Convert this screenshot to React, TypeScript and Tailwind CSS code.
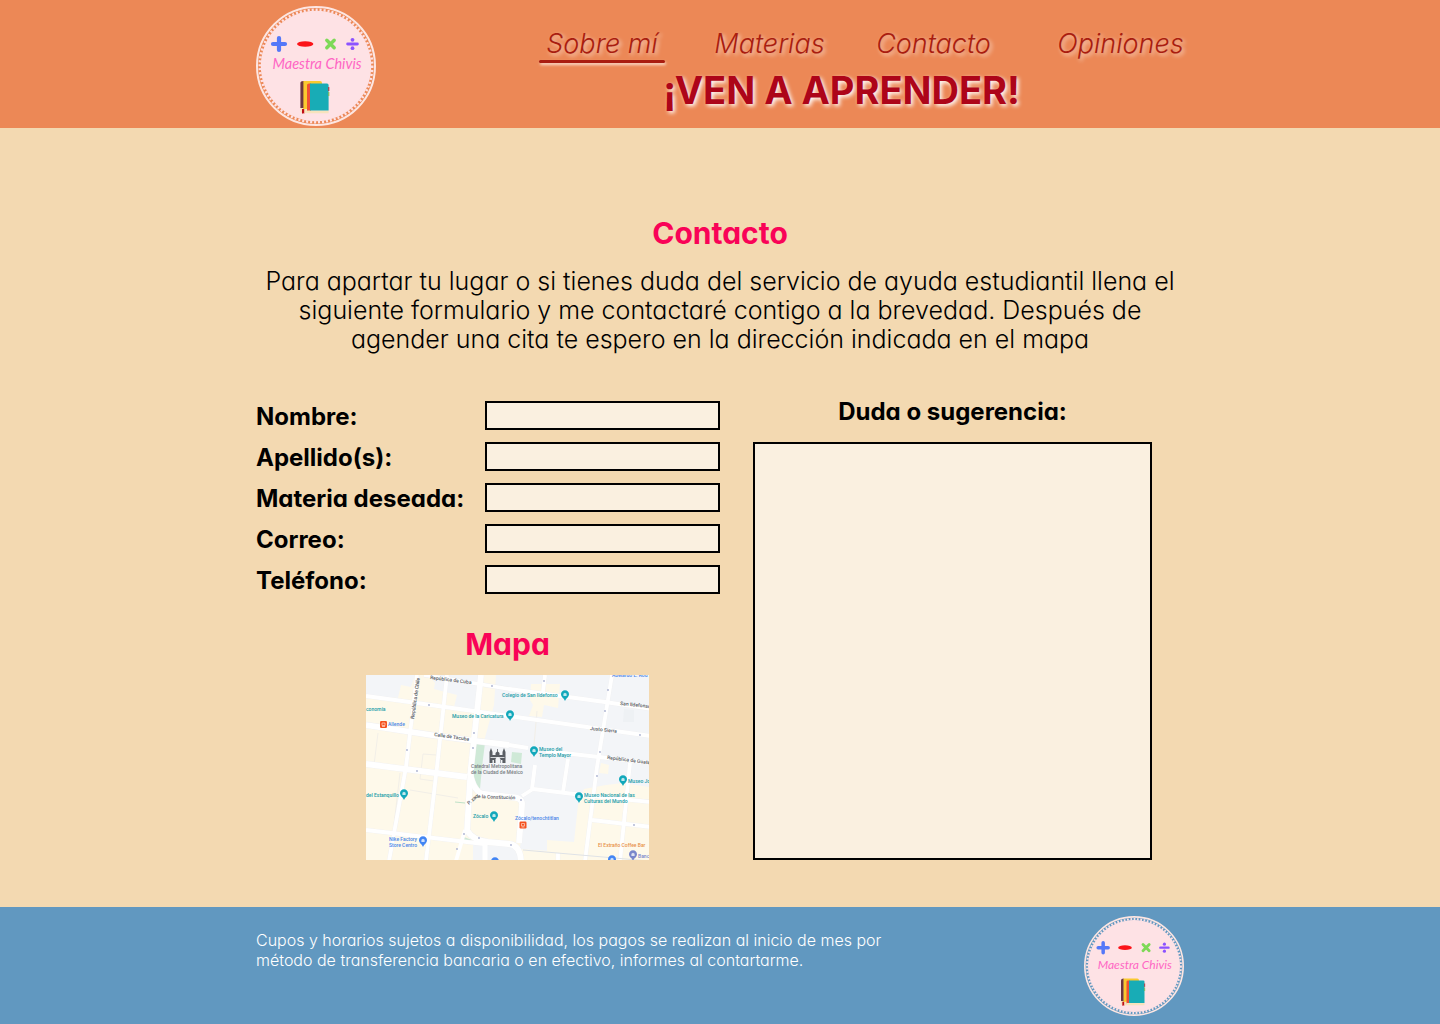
type LogoProps = { className: string };

function Logo({ className }: LogoProps) {
  return (
    <svg viewBox="0 0 120 120" className={className} role="img" aria-label="Maestra Chivis">
      <circle cx="60" cy="60" r="59" fill="none" stroke="#fde6e2" strokeWidth="2" />
      <circle cx="60" cy="60" r="55.2" fill="#fee2e5" />
      <circle cx="60" cy="60" r="56.2" fill="none" stroke="#fee2e5" strokeWidth="2.6" strokeDasharray="2.1 1.9" />
      <path d="M23 32v12M17 38h12" stroke="#5478f8" strokeWidth="4.2" strokeLinecap="round" />
      <ellipse cx="49.2" cy="38" rx="8.2" ry="2.8" fill="#fb1419" />
      <path d="M70.8 34.2l7.4 7.6M78.2 34.2l-7.4 7.6" stroke="#7ed957" strokeWidth="3.4" strokeLinecap="round" />
      <path d="M91.6 38h9.8" stroke="#8c52ff" strokeWidth="2.8" strokeLinecap="round" />
      <circle cx="96.5" cy="33.8" r="1.9" fill="#8c52ff" />
      <circle cx="96.5" cy="42.2" r="1.9" fill="#8c52ff" />
      <text x="61" y="63" textAnchor="middle" fontSize="14.5" fontStyle="italic" fill="#ff66c4" className="font-['Lato',sans-serif]">
        Maestra Chivis
      </text>
      <path d="M44.400 101h8v6h-6q-2 0-2-2z" fill="#f7e3bd" />
      <path d="M47 75h17q2 0 2 2v26H47z" fill="#fac92f" />
      <path d="M44.400 77q0-2 3-2v27h-3z" fill="#6c3640" />
      <path d="M46 103h2.200v5l-1.100-1-1.100 1z" fill="#c00d17" />
      <path d="M51 79q0-1.500 2-1.500h2V105h-4z" fill="#ef5035" />
      <path d="M51 104.500h21.600v2.700H53q-2 0-2-2.700z" fill="#f7e3bd" />
      <path d="M54 77.500h17q1.600 0 1.600 1.500v25.500H54z" fill="#18acb6" />
      <path d="M72.800 81v4" stroke="#b3212d" strokeWidth="1" />
      <path d="M72.800 86v4" stroke="#77b944" strokeWidth="1" />
    </svg>
  );
}

const minorRoads = [
  "M58 0L143 14L239 27L285 34",
  "M0 21L65 30L143 41L285 61",
  "M51 0L40 92L23 186",
  "M81 0L71 92L60 186",
  "M0 155L118 169",
  "M179 0L177 17",
  "M156 121L167 114L216 120L285 127",
  "M226 145L285 152",
  "M246 0L231 92L219 186",
  "M264 88L254 186",
  "M202 84L197 117",
  "M169 90L166 114",
  "M192 178V186",
  "M143 70L162 73",
  "M180 76L285 88",
];

const majorRoads = [
  "M0 50L65 60L110 66L143 70",
  "M0 89L101 102",
  "M115 0L105 92L104 106L101 157",
  "M104 98Q108 118 118 119L143 122Q157 122 156 130L153 168",
  "M101 155Q106 165 122 167L143 169Q154 170 155 186",
];

type Pin = { x: number; y: number; color: string };

const pins: Pin[] = [
  { x: 199, y: 20, color: "#12a8bb" },
  { x: 144, y: 40, color: "#12a8bb" },
  { x: 168, y: 76, color: "#12a8bb" },
  { x: 38, y: 119, color: "#12a8bb" },
  { x: 128, y: 141, color: "#12a8bb" },
  { x: 257, y: 105, color: "#12a8bb" },
  { x: 213, y: 122, color: "#12a8bb" },
  { x: 57, y: 166, color: "#4285f4" },
  { x: 267, y: 180, color: "#7986cb" },
  { x: 246, y: 185, color: "#4285f4" },
  { x: 129, y: 187, color: "#4285f4" },
];

type Label = { x: number; y: number; text: string; color: string; angle?: number };

const teal = "#179ca8";
const blue = "#4a86e8";
const gray = "#55595e";
const orange = "#e8914a";

const mapLabels: Label[] = [
  { x: 64, y: 4, text: "República de Cuba", color: gray, angle: 7 },
  { x: 48, y: 44, text: "República de Chile", color: gray, angle: -82 },
  { x: 0, y: 36, text: "conomía", color: teal },
  { x: 22, y: 51, text: "Allende", color: blue },
  { x: 68, y: 61, text: "Calle de Tacuba", color: gray, angle: 8 },
  { x: 86, y: 43, text: "Museo de la Caricatura", color: teal },
  { x: 136, y: 22, text: "Colegio de San Ildefonso", color: teal },
  { x: 246, y: 2, text: "Abelardo L. Rod", color: blue },
  { x: 254, y: 30, text: "San Ildefonso", color: gray, angle: 6 },
  { x: 224, y: 55, text: "Justo Sierra", color: gray, angle: 6 },
  { x: 173, y: 76, text: "Museo del", color: teal },
  { x: 173, y: 82, text: "Templo Mayor", color: teal },
  { x: 241, y: 84, text: "República de Guatem", color: gray, angle: 7 },
  { x: 105, y: 93, text: "Catedral Metropolitana", color: "#777c82" },
  { x: 105, y: 99, text: "de la Ciudad de México", color: "#777c82" },
  { x: 0, y: 122, text: "del Estanquillo", color: teal },
  { x: 109, y: 123, text: "de la Constitución", color: gray, angle: 2 },
  { x: 103, y: 130, text: "P. za", color: gray, angle: -42 },
  { x: 107, y: 143, text: "Zócalo", color: teal },
  { x: 149, y: 145, text: "Zócalo/tenochtitlan", color: blue },
  { x: 23, y: 166, text: "Nike Factory", color: blue },
  { x: 23, y: 172, text: "Store Centro", color: blue },
  { x: 262, y: 108, text: "Museo Jo", color: teal },
  { x: 218, y: 122, text: "Museo Nacional de las", color: teal },
  { x: 218, y: 128, text: "Culturas del Mundo", color: teal },
  { x: 232, y: 172, text: "El Extraño Coffee Bar", color: orange },
  { x: 272, y: 183, text: "Banc", color: "#7986cb" },
];

function StreetMap() {
  return (
    <svg
      viewBox="0 0 283 185"
      className="block w-full"
      role="img"
      aria-label="Mapa del centro de la Ciudad de México"
    >
      <rect width="283" height="185" fill="#fef9ea" />
      <path d="M0 0H49L45 12L35 10L32 23L0 20zM63 0H114L110 36L88 32L91 20L68 14L69 8z" fill="#f3f5f8" />
      <path
        d="M130 0H283V112L257 108L240 110L218 114L212 130L208 167L181 165V176L154 174L157 125L113 118L118 66L128 30z"
        fill="#f3f5f8"
      />
      <path d="M165 9H194L192 33L178 30L176 42L163 41L167 30L164 25z" fill="#fef9ea" />
      <path d="M235 88L243 90L242 99L233 98z" fill="#fef9ea" />
      <path d="M120 170L152 172V185H107V160z" fill="#f3f5f8" />
      <path d="M258 34L268 35V47H257z" fill="#eef1f4" />
      <path d="M110 67L119 68L116 92L114 114L105 102z" fill="#cfe9d7" />
      <path d="M146 77L156 78L155 89L145 87zM98 162L106 165L98 166z" fill="#cfe9d7" />
      <path d="M89 127L99 128" stroke="#bfe2c8" strokeWidth="1" />
      <g fill="none" stroke="#f2efe8" strokeWidth="1">
        <path d="M12 58L8 90M54 104L57 79L70 80M54 104L68 106M44 115L92 123M171 36L168 70M34 98L28 150" />
      </g>
      <g fill="none" stroke="#f0f0f1" strokeLinejoin="round">
        {minorRoads.map((d) => (
          <path key={d} d={d} strokeWidth="4.400" />
        ))}
        {majorRoads.map((d) => (
          <path key={d} d={d} strokeWidth="6.400" />
        ))}
      </g>
      <g fill="none" stroke="#ffffff" strokeLinejoin="round">
        {minorRoads.map((d) => (
          <path key={d} d={d} strokeWidth="3.800" />
        ))}
        {majorRoads.map((d) => (
          <path key={d} d={d} strokeWidth="5.800" />
        ))}
        <path d="M99 155L90 186" strokeWidth="3.800" />
        <path d="M119 168V186" strokeWidth="5" />
      </g>
      <path d="M157 175L283 186" stroke="#dfe2e6" strokeWidth="1" />
      <g fill="#a9b0cf">
        <circle cx="63" cy="30" r="0.900" />
        <circle cx="126" cy="11" r="0.900" />
        <circle cx="41" cy="75" r="0.900" />
        <circle cx="108" cy="58" r="0.900" />
        <circle cx="107" cy="73" r="0.900" />
        <circle cx="51" cy="96" r="0.900" />
        <circle cx="98" cy="159" r="0.900" />
        <circle cx="113" cy="163" r="0.900" />
        <circle cx="91" cy="174" r="0.900" />
        <circle cx="145" cy="170" r="0.900" />
        <circle cx="178" cy="6" r="0.900" />
        <circle cx="242" cy="15" r="0.900" />
        <circle cx="239" cy="36" r="0.900" />
        <circle cx="234" cy="77" r="0.900" />
        <circle cx="274" cy="60" r="0.900" />
        <circle cx="231" cy="101" r="0.900" />
        <circle cx="268" cy="150" r="0.900" />
        <circle cx="155" cy="125" r="0.900" />
      </g>
      <g fill="#5a5e64">
        <path d="M123.500 88V77l1.500-4 1.500 4v3h3v-2q2-3 4 0v2h3v-3l1.500-4 1.500 4v11h-5v-4q-3-4-5 0v4z" />
        <path d="M124.500 82h14v0.800h-14z" fill="#f3f5f8" />
        <path d="M126.500 85h1.400v3h-1.400zM135 85h1.400v3H135z" fill="#f3f5f8" />
        <path d="M131.200 74h.8v3h-.8z" />
      </g>
      {pins.map((pin) => (
        <g key={`${pin.x}-${pin.y}`}>
          <path
            d={`M${pin.x} ${pin.y + 6}q-.8-2.400-2.600-3.600a4 4 0 1 1 5.200 0q-1.800 1.200-2.600 3.600z`}
            fill={pin.color}
          />
          <path
            d={`M${pin.x - 1.600} ${pin.y - 1.200}l1.600-1 1.600 1v2.200h-3.200z`}
            fill="#ffffff"
            opacity="0.750"
          />
        </g>
      ))}
      <g>
        <rect x="14" y="46" width="7" height="7" rx="1.200" fill="#f4511e" />
        <path d="M16 48h3v2.500h-3zM16 51.500h3" stroke="#ffd9c9" strokeWidth="0.700" fill="none" />
        <rect x="153.500" y="146.500" width="7" height="7" rx="1.200" fill="#f4511e" />
        <path d="M155.500 148.500h3v2.500h-3zM155.500 152h3" stroke="#ffd9c9" strokeWidth="0.700" fill="none" />
      </g>
      <g fontSize="5" className="font-['Roboto',sans-serif] font-medium">
        {mapLabels.map((label) => (
          <text
            key={label.text}
            x={label.x}
            y={label.y}
            fill={label.color}
            transform={label.angle ? `rotate(${label.angle} ${label.x} ${label.y})` : undefined}
          >
            {label.text}
          </text>
        ))}
      </g>
    </svg>
  );
}

const fields = [
  { id: "nombre", label: "Nombre:", type: "text" },
  { id: "apellidos", label: "Apellido(s):", type: "text" },
  { id: "materia", label: "Materia deseada:", type: "text" },
  { id: "correo", label: "Correo:", type: "email" },
  { id: "telefono", label: "Teléfono:", type: "tel" },
];

export default function App() {
  return (
    <div className="flex min-h-screen flex-col bg-[#f3d9b1] font-['Century_Gothic','Inter',sans-serif] text-black [font-feature-settings:'cv11']">
      <header className="bg-[#ec8856]">
        <div className="mx-auto flex h-32 w-full max-w-[928px] items-start justify-between pt-1.5">
          <Logo className="size-[120px] shrink-0" />
          <div className="flex flex-col pt-[22px] text-center">
            <nav className="flex text-[27px] leading-8 font-light whitespace-nowrap text-[#a91d10] italic [text-shadow:2px_2px_4px_#ffffffb0]">
              <a href="#sobre-mi" className="flex w-[126px] flex-col items-center">
                Sobre mí
                <span className="h-[3px] w-full rounded-full bg-[#a91d10] shadow-[1px_2px_3px_#ffffffb0]" />
              </a>
              <a href="#materias" className="ml-[50px] flex w-[109px] justify-center">Materias</a>
              <a href="#contacto" className="ml-12 flex w-[123px] justify-center">Contacto</a>
              <a href="#opiniones" className="ml-[62px] flex w-[127px] justify-center">Opiniones</a>
            </nav>
            <h1 className="mr-10 text-[38px] leading-[54px] font-bold text-[#ad0519] [text-shadow:2px_2px_4px_#ffffff]">
              ¡VEN A APRENDER!
            </h1>
          </div>
        </div>
      </header>

      <main id="contacto" className="mx-auto w-full max-w-[928px] flex-1 pt-[87px] pb-[47px]">
        <h2 className="text-center text-[30px] leading-9 font-bold text-[#f90357]">Contacto</h2>
        <p className="mt-4 text-center text-[25px] leading-[29px] font-light">
          Para apartar tu lugar o si tienes duda del servicio de ayuda estudiantil llena el
          <br />
          siguiente formulario y me contactaré contigo a la brevedad. Después de
          <br />
          agender una cita te espero en la dirección indicada en el mapa
        </p>

        <form className="mt-11 flex gap-[33px]">
          <div className="w-[464px] pt-[3px]">
            <div className="flex flex-col gap-3">
              {fields.map((field) => (
                <div key={field.id} className="flex h-[29px] items-center justify-between">
                  <label htmlFor={field.id} className="pt-0.5 text-2xl leading-[29px] font-bold">
                    {field.label}
                  </label>
                  <input
                    id={field.id}
                    name={field.id}
                    type={field.type}
                    className="h-[29px] w-[235px] border-2 border-black bg-[#faf0e0] px-2 text-base"
                  />
                </div>
              ))}
            </div>
            <section className="mt-8 ml-[110px] w-[283px]">
              <h2 className="mb-[13px] text-center text-[30px] leading-9 font-bold text-[#f90357]">Mapa</h2>
              <StreetMap />
            </section>
          </div>
          <div className="flex w-[399px] flex-col text-center">
            <label htmlFor="duda" className="text-2xl leading-7 font-bold">
              Duda o sugerencia:
            </label>
            <textarea
              id="duda"
              name="duda"
              className="mt-4 flex-1 resize-none border-2 border-black bg-[#faf0e0] p-2 text-base"
            />
          </div>
        </form>
      </main>

      <footer className="bg-[#6198c0]">
        <div className="mx-auto flex w-full max-w-[928px] items-start justify-between pt-[9px] pb-2">
          <p className="pt-3.5 text-base leading-5 font-light text-white">
            Cupos y horarios sujetos a disponibilidad, los pagos se realizan al inicio de mes por
            <br />
            método de transferencia bancaria o en efectivo, informes al contartarme.
          </p>
          <Logo className="size-[100px] shrink-0" />
        </div>
      </footer>
    </div>
  );
}
